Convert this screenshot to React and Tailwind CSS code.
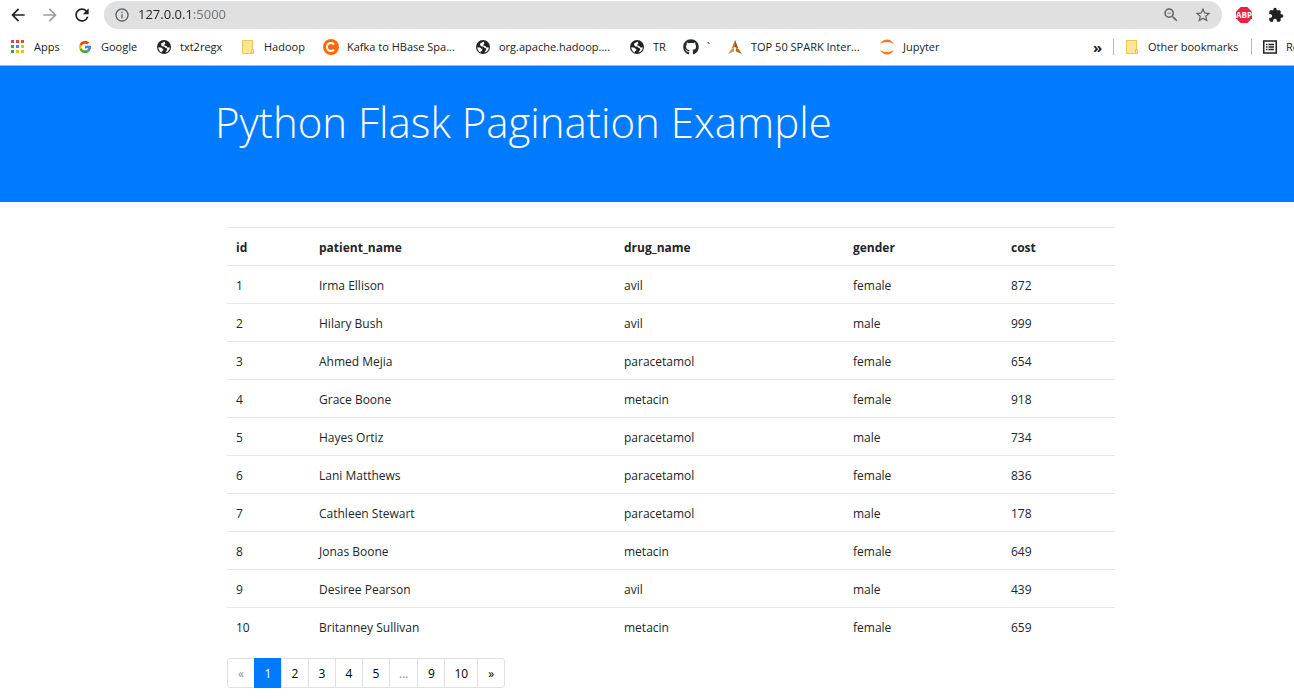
import { useId } from 'react';
import {
  MdArrowBack,
  MdArrowForward,
  MdRefresh,
  MdInfoOutline,
  MdZoomOut,
  MdStarBorder,
  MdExtension,
} from 'react-icons/md';
import { FaGithub } from 'react-icons/fa';

const AppsIcon = () => {
  const colors = ['#ea4335', '#ea4335', '#ea4335', '#34a853', '#4285f4', '#fbbc04', '#34a853', '#fbbc04', '#fbbc04'];
  return (
    <svg viewBox="0 0 16 16" className="size-4" aria-hidden="true">
      {colors.map((fill, i) => (
        <rect key={i} x={1 + (i % 3) * 5} y={1 + Math.floor(i / 3) * 5} width="3" height="3" fill={fill} />
      ))}
    </svg>
  );
};

const GoogleIcon = () => (
  <svg viewBox="4 4 40 40" className="size-3" aria-hidden="true">
    <path fill="#FFC107" d="M43.6 20.1H42V20H24v8h11.3C33.7 32.7 29.2 36 24 36c-6.600 0-12-5.400-12-12s5.400-12 12-12c3.100 0 5.800 1.200 8 3l5.700-5.700C34 6.100 29.300 4 24 4 13 4 4 13 4 24s9 20 20 20 20-9 20-20c0-1.300-.1-2.700-.4-3.900z" />
    <path fill="#FF3D00" d="M6.300 14.700l6.600 4.800C14.700 15.100 19 12 24 12c3.100 0 5.800 1.200 8 3l5.700-5.700C34 6.100 29.300 4 24 4 16.300 4 9.700 8.300 6.300 14.700z" />
    <path fill="#34A853" d="M24 44c5.200 0 9.900-2 13.400-5.200l-6.200-5.200C29.200 35 26.700 36 24 36c-5.200 0-9.600-3.300-11.300-7.900l-6.500 5C9.500 39.600 16.200 44 24 44z" />
    <path fill="#4285F4" d="M43.600 20.100H24v8h11.300c-.8 2.200-2.200 4.200-4.100 5.600l6.200 5.200C37 39.200 44 34 44 24c0-1.300-.1-2.700-.4-3.900z" />
  </svg>
);

const GlobeIcon = () => {
  const clip = useId();
  return (
    <svg viewBox="0 0 16 16" className="size-4" aria-hidden="true">
      <clipPath id={clip}>
        <circle cx="8" cy="8" r="7" />
      </clipPath>
      <circle cx="8" cy="8" r="7" fill="#202124" />
      <g clipPath={`url(#${clip})`} fill="#fff">
        <path d="M8.600 2.400 7 3.400 5.300 4.300 5 6l1.500 1.400 2.200.3.800 1.300 1.400.2.300 1.500-1.900 2.900 2.300-.8 2-2.600V8.300l-2.200.2-1-1.500-2.700-.8 1.700-1.400z" />
        <path d="M2.300 8.200 5 8.500l2.500 1.900-.4 1.200-1.400.8.200 1.300-1.900-1.300-1.400-2.200z" />
      </g>
    </svg>
  );
};

const FolderIcon = () => (
  <svg viewBox="0 0 16 16" className="size-4" aria-hidden="true">
    <path d="M2.500 1.500h10v9h1v4h-11z" fill="#ffe694" stroke="#e8c84f" />
    <path d="M11.500 14v-3.500h2" fill="none" stroke="#e8c84f" />
  </svg>
);

const CourseIcon = () => (
  <svg viewBox="0 0 16 16" className="size-4" aria-hidden="true">
    <circle cx="8" cy="8" r="8" fill="#ff6a00" />
    <path d="M11 5.500A4 4 0 1 0 11 10.500" fill="none" stroke="#fff" strokeWidth="2" />
  </svg>
);

const SparkIcon = () => (
  <svg viewBox="0 0 16 16" className="size-4" aria-hidden="true">
    <path d="M8 1 4.800 9.500 8 8l3.200 1.500z" fill="#c8752c" />
    <path d="M8 1v7l3.200 1.500z" fill="#9d5518" />
    <path d="M4.300 10 1 15l6-2.500V9z" fill="#e09347" />
    <path d="M11.700 10 15 15l-6-2.500V9z" fill="#b9651f" />
  </svg>
);

const JupyterIcon = () => (
  <svg viewBox="0 0 16 16" className="size-4" aria-hidden="true">
    <path d="M1 5.500C2.500 2 5 .6 8 .6S13.500 2 15 5.500C13 3.700 10.500 3 8 3s-5 .7-7 2.500z" fill="#f37726" />
    <path d="M1 10.500C2.500 14 5 15.400 8 15.400s5.500-1.400 7-4.900c-2 1.800-4.500 2.500-7 2.500s-5-.7-7-2.500z" fill="#f37726" />
  </svg>
);

const ReadingListIcon = () => (
  <svg viewBox="0 0 16 16" className="size-4" aria-hidden="true">
    <rect x="1.750" y="2" width="12.500" height="12" fill="none" stroke="#202124" strokeWidth="1.500" />
    <path d="M4 5.500h1.500M4 8h1.500M4 10.500h1.500M6.500 5.500H12M6.500 8H12M6.500 10.500H12" stroke="#202124" strokeWidth="1.400" />
  </svg>
);

const AdblockIcon = () => (
  <svg viewBox="0 0 16 16" className="size-4" aria-hidden="true">
    <path d="M4.700 0h6.600L16 4.700v6.600L11.300 16H4.700L0 11.300V4.700z" fill="#ed1e45" />
    <text x="8" y="10.800" textAnchor="middle" fill="#fff" fontSize="8" fontWeight="700" fontFamily="Open Sans, sans-serif">
      ABP
    </text>
  </svg>
);

const bookmarks = [
  { label: 'Apps', Icon: AppsIcon },
  { label: 'Google', Icon: GoogleIcon },
  { label: 'txt2regx', Icon: GlobeIcon },
  { label: 'Hadoop', Icon: FolderIcon },
  { label: 'Kafka to HBase Spa...', Icon: CourseIcon },
  { label: 'org.apache.hadoop....', Icon: GlobeIcon },
  { label: 'TR', Icon: GlobeIcon },
  { label: '`', Icon: () => <FaGithub className="size-4 text-[#24292e]" /> },
  { label: 'TOP 50 SPARK Inter...', Icon: SparkIcon },
  { label: 'Jupyter', Icon: JupyterIcon },
];

const columns = ['id', 'patient_name', 'drug_name', 'gender', 'cost'];

const rows = [
  [1, 'Irma Ellison', 'avil', 'female', 872],
  [2, 'Hilary Bush', 'avil', 'male', 999],
  [3, 'Ahmed Mejia', 'paracetamol', 'female', 654],
  [4, 'Grace Boone', 'metacin', 'female', 918],
  [5, 'Hayes Ortiz', 'paracetamol', 'male', 734],
  [6, 'Lani Matthews', 'paracetamol', 'female', 836],
  [7, 'Cathleen Stewart', 'paracetamol', 'male', 178],
  [8, 'Jonas Boone', 'metacin', 'female', 649],
  [9, 'Desiree Pearson', 'avil', 'male', 439],
  [10, 'Britanney Sullivan', 'metacin', 'female', 659],
];

const pages = ['«', '1', '2', '3', '4', '5', '...', '9', '10', '»'];

function Bookmark({ label, Icon }) {
  return (
    <a href="#" className="flex items-center gap-2 whitespace-nowrap">
      <span className="flex size-4 shrink-0 items-center justify-center">
        <Icon />
      </span>
      {label}
    </a>
  );
}

function Toolbar() {
  return (
    <div className="flex h-[30px] items-center text-[#202124]">
      <div className="flex w-[104px] shrink-0 items-center gap-3 pl-2">
        <button aria-label="Back"><MdArrowBack className="size-5" /></button>
        <button aria-label="Forward" className="text-[#9e9e9e]"><MdArrowForward className="size-5" /></button>
        <button aria-label="Reload"><MdRefresh className="size-5" /></button>
      </div>
      <div className="flex h-7 min-w-0 flex-1 items-center gap-2 rounded-full bg-[#e0e0e0] px-[10px] text-[#5f6368]">
        <MdInfoOutline className="size-4 shrink-0" />
        <input
          aria-label="Address"
          defaultValue="127.0.0.1:5000"
          className="min-w-0 flex-1 bg-[linear-gradient(90deg,#202124_54px,#6b6f73_54px)] bg-clip-text text-[13px] text-transparent outline-none"
        />
        <div className="flex shrink-0 items-center gap-[14px]">
          <button aria-label="Zoom"><MdZoomOut className="size-[18px]" /></button>
          <button aria-label="Bookmark this page"><MdStarBorder className="size-[18px]" /></button>
        </div>
      </div>
      <div className="flex shrink-0 items-center gap-4 pr-[10px] pl-[14px]">
        <button aria-label="Adblock"><AdblockIcon /></button>
        <button aria-label="Extensions"><MdExtension className="size-4" /></button>
      </div>
    </div>
  );
}

function BookmarksBar() {
  return (
    <nav aria-label="Bookmarks" className="flex h-9 items-center justify-between overflow-hidden border-b border-[#b8b8b8] pb-px text-[11px] text-[#202124]">
      <div className="grid grid-cols-[67px_79px_84px_83px_152px_154px_54px_44px_152px_90px] pl-[10px]">
        {bookmarks.map((item) => (
          <Bookmark key={item.label} {...item} />
        ))}
      </div>
      <div className="flex w-[202px] shrink-0 items-center overflow-hidden whitespace-nowrap">
        <button aria-label="More bookmarks" className="w-[21px] shrink-0 pl-px text-left text-[15px] leading-6 font-bold">»</button>
        <span className="h-4 w-px shrink-0 bg-[#b8b8b8]" />
        <div className="w-[137px] shrink-0 pl-[10px]">
          <Bookmark label="Other bookmarks" Icon={FolderIcon} />
        </div>
        <span className="h-4 w-px shrink-0 bg-[#b8b8b8]" />
        <div className="pl-[10px]">
          <Bookmark label="Reading list" Icon={ReadingListIcon} />
        </div>
      </div>
    </nav>
  );
}

function pageStyle(page) {
  if (page === '1') return 'border-[#007bff] bg-[#007bff] text-white';
  if (page === '«' || page === '...') return 'border-[#dee2e6] text-[#8a9299]';
  return 'border-[#dee2e6] text-black';
}

export default function App() {
  return (
    <div className="overflow-x-hidden bg-white font-['Open_Sans','Noto_Sans',sans-serif] text-[#212529]">
      <header>
        <Toolbar />
        <BookmarksBar />
      </header>
      <section className="bg-[#007bff] pl-6">
        <div className="mx-auto max-w-[912px] px-3 pt-7 pb-[52px]">
          <h1 className="text-[42px] leading-[56px] font-light whitespace-nowrap text-white">Python Flask Pagination Example</h1>
        </div>
      </section>
      <main className="pl-6">
        <div className="mx-auto max-w-[912px] pt-[25px] pb-[11px] pl-6 text-[12px]">
          <table className="w-full table-fixed border-collapse text-left">
            <colgroup>
              <col className="w-[83px]" />
              <col className="w-[305px]" />
              <col className="w-[229px]" />
              <col className="w-[158px]" />
              <col />
            </colgroup>
            <thead>
              <tr className="h-[38px] border-t border-[#e4e7ea]">
                {columns.map((name) => (
                  <th key={name} className="px-[9px] pt-[2px] font-bold">{name}</th>
                ))}
              </tr>
            </thead>
            <tbody>
              {rows.map((row) => (
                <tr key={row[0]} className="h-[38px] border-t border-[#e4e7ea]">
                  {row.map((value, i) => (
                    <td key={i} className="px-[9px] pt-[2px]">{value}</td>
                  ))}
                </tr>
              ))}
            </tbody>
          </table>
          <nav aria-label="Pagination" className="mt-3">
            <ul className="flex">
              {pages.map((page) => (
                <li key={page} className="group -ml-px first:ml-0">
                  <a
                    href="#"
                    aria-current={page === '1' ? 'page' : undefined}
                    className={`flex h-[30px] min-w-7 items-center justify-center border px-[9px] pt-[3px] group-first:rounded-l-[3px] group-last:rounded-r-[3px] ${pageStyle(page)}`}
                  >
                    {page}
                  </a>
                </li>
              ))}
            </ul>
          </nav>
        </div>
      </main>
    </div>
  );
}
